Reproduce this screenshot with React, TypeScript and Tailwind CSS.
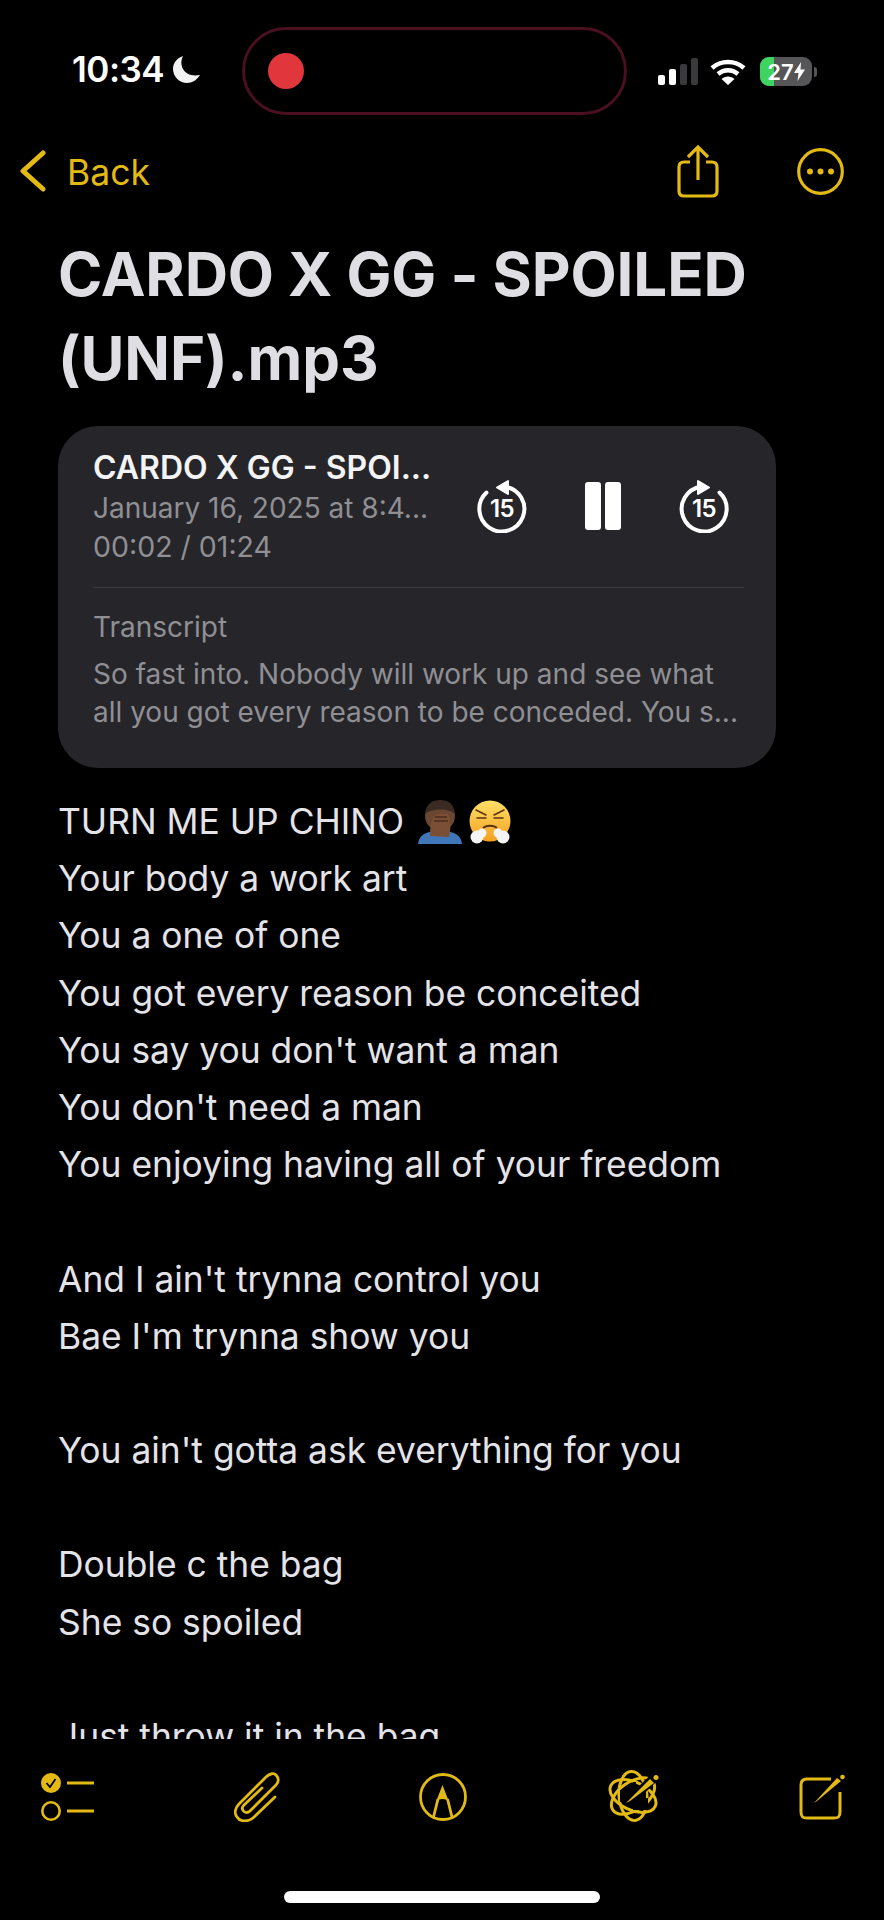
const lyrics = [
  "Your body a work art",
  "You a one of one",
  "You got every reason be conceited",
  "You say you don't want a man",
  "You don't need a man",
  "You enjoying having all of your freedom",
  "",
  "And I ain't trynna control you",
  "Bae I'm trynna show you",
  "",
  "You ain't gotta ask everything for you",
  "",
  "Double c the bag",
  "She so spoiled",
  "",
  "Just throw it in the bag",
];

function Moon() {
  return (
    <svg width="30" height="30" viewBox="0 0 30 30">
      <path d="M11 2C6 12 13 24 28 21 25 26 20 29 15 29 7 29 1 22 1 15 1 9 5 4 11 2Z" fill="#f2f2f2" />
    </svg>
  );
}

function StatusIcons() {
  return (
    <div className="flex items-center pl-[31px] pt-[1px]">
      <svg width="41" height="27" viewBox="0 0 41 27" className="mr-[11px]">
        <rect x="0" y="17" width="7" height="10" rx="2" fill="#fff" />
        <rect x="11" y="11" width="7" height="16" rx="2" fill="#fff" />
        <rect x="22" y="6" width="7" height="21" rx="2" fill="#3a3a3c" />
        <rect x="33" y="0" width="7" height="27" rx="2" fill="#3a3a3c" />
      </svg>
      <svg width="36" height="26" viewBox="0 0 36 26" className="mr-[14px]">
        <path d="M2 9C11 1 25 1 34 9" fill="none" stroke="#fff" strokeWidth="4.5" />
        <path d="M8 15C14 10 22 10 28 15" fill="none" stroke="#fff" strokeWidth="4.5" />
        <path d="M18 26 11.500 20C15 16.500 21 16.500 24.500 20Z" fill="#fff" />
      </svg>
      <div className="relative flex h-[29px] w-[52px] items-center justify-center overflow-hidden rounded-[9px] bg-[#565658] text-[22px] leading-none font-semibold text-white">
        <div className="absolute inset-y-0 left-0 w-[14px] bg-[#3fd35f]" />
        <span className="relative">27</span>
        <svg width="11" height="19" viewBox="0 0 11 19" className="relative">
          <path d="M7 0 0 11H4.500L3.500 19 11 7.500H6.500Z" fill="#fff" />
        </svg>
      </div>
      <div className="ml-[2px] h-[10px] w-[3px] rounded-r-full bg-[#565658]" />
    </div>
  );
}

function ShareIcon() {
  return (
    <svg width="42" height="53" viewBox="0 0 42 53" fill="none" stroke="#e3b914" strokeWidth="3.200">
      <path d="M13 17H7C3.500 17 2 19 2 22V46C2 49.500 3.500 51 7 51H35C38.500 51 40 49.500 40 46V22C40 19 38.500 17 35 17H29" />
      <path d="M21 35V2M11 12 21 2 31 12" />
    </svg>
  );
}

function MoreIcon() {
  return (
    <svg width="47" height="47" viewBox="0 0 47 47">
      <circle cx="23.500" cy="23.500" r="21.800" fill="none" stroke="#e3b914" strokeWidth="3.200" />
      <circle cx="13" cy="23.500" r="3" fill="#e3b914" />
      <circle cx="23.500" cy="23.500" r="3" fill="#e3b914" />
      <circle cx="34" cy="23.500" r="3" fill="#e3b914" />
    </svg>
  );
}

function SkipIcon({ forward = false }: { forward?: boolean }) {
  return (
    <div className="relative h-[54px] w-[50px]">
      <svg width="50" height="54" viewBox="0 0 50 54" className={forward ? "-scale-x-100" : ""}>
        <path d="M28 7.700A22.500 22.500 0 1 1 9.500 13.500" fill="none" stroke="#fff" strokeWidth="4" strokeLinecap="round" />
        <path d="M31 2V15L20 8.500Z" fill="#fff" stroke="#fff" strokeWidth="2" strokeLinejoin="round" />
      </svg>
      <span className="absolute inset-x-0 top-[16px] text-center text-[24px] leading-[28px] font-semibold tracking-[-0.5px] text-white">
        15
      </span>
    </div>
  );
}

function PauseIcon() {
  return (
    <div className="flex h-[48px] w-[36px] justify-between">
      <div className="h-full w-[16px] rounded-[3px] bg-white" />
      <div className="h-full w-[16px] rounded-[3px] bg-white" />
    </div>
  );
}

function FacepalmEmoji() {
  return (
    <svg width="46" height="46" viewBox="0 0 46 46" className="absolute top-[6px] left-[417px]">
      <path d="M1 45C2 35 10 32 23 32 36 32 44 35 45 45Z" fill="#3f77b8" />
      <circle cx="23" cy="17" r="15" fill="#6b4630" />
      <path d="M8 15C9 4 16 1 23 1 31 1 37 4 38 15 32 9 15 9 8 15Z" fill="#3b2a21" />
      <path d="M13 37C13 26 15 16 21 15L31 15C34 20 34 30 32 38Z" fill="#7a4f36" />
      <path d="M18 18H30M17 22H31" stroke="#4a2d1e" strokeWidth="1.500" />
    </svg>
  );
}

function HuffEmoji() {
  return (
    <svg width="44" height="44" viewBox="0 0 44 44" className="absolute top-[7px] left-[468px]">
      <defs>
        <linearGradient id="huff" x1="0" y1="0" x2="0" y2="1">
          <stop offset="0" stopColor="#ffe066" />
          <stop offset="1" stopColor="#f5a020" />
        </linearGradient>
      </defs>
      <circle cx="22" cy="21" r="20.500" fill="url(#huff)" />
      <path d="M8 10 18 15M36 10 26 15M9 18H18M26 18H35" stroke="#5a3412" strokeWidth="1.600" strokeLinecap="round" />
      <path d="M15 28C18 25 26 25 29 28" fill="none" stroke="#5a3412" strokeWidth="1.800" />
      <circle cx="9" cy="37" r="6.500" fill="#f4f4f4" />
      <circle cx="14" cy="33" r="4.500" fill="#f4f4f4" />
      <circle cx="35" cy="37" r="6.500" fill="#f4f4f4" />
      <circle cx="30" cy="33" r="4.500" fill="#f4f4f4" />
    </svg>
  );
}

function ChecklistIcon() {
  return (
    <svg width="54" height="48" viewBox="0 0 54 48">
      <circle cx="10" cy="10" r="10" fill="#e3b914" />
      <path d="M5.500 10 9 14 14.500 6" fill="none" stroke="#000" strokeWidth="1.800" />
      <circle cx="10" cy="38" r="8.700" fill="none" stroke="#e3b914" strokeWidth="2.600" />
      <path d="M26 10H53M26 38H53" stroke="#e3b914" strokeWidth="3" />
    </svg>
  );
}

function ClipIcon() {
  return (
    <svg width="46" height="50" viewBox="0 0 46 50" fill="none" stroke="#e3b914" strokeWidth="2.800" strokeLinecap="round">
      <path d="M41 25 19 46C14 50 6 50 3 45 0 41 1 36 5 32L32 5C36 1 40 1 42 3 45 6 45 10 42 13L16 39C14 41 11 41 9.500 39 7.500 37 8 35 10 33L28 16" />
    </svg>
  );
}

function MarkupIcon() {
  return (
    <svg width="48" height="48" viewBox="0 0 48 48" fill="none" stroke="#e3b914" strokeWidth="2.800">
      <circle cx="24" cy="24" r="22.500" />
      <path d="M14.500 44 19 26M33 44 28.500 26" />
      <path d="M23.500 12 29.500 27.500Q23.500 24.500 17.500 27.500Z" fill="#e3b914" stroke="none" />
    </svg>
  );
}

function AtomPenIcon() {
  return (
    <svg width="54" height="54" viewBox="0 0 54 54" fill="none" stroke="#e3b914" strokeWidth="3">
      <ellipse cx="27" cy="26" rx="14" ry="24.500" transform="rotate(-5 27 26)" />
      <ellipse cx="27" cy="26" rx="14" ry="24.500" transform="rotate(55 27 26)" />
      <ellipse cx="27" cy="26" rx="14" ry="24.500" transform="rotate(115 27 26)" />
      <path d="M14 26H40M27 34H42M27 18H30" stroke="#000" strokeWidth="12" />
      <path d="M22 33 54 2" stroke="#000" strokeWidth="9" />
      <path d="M20 33 44 9 48 13 24 31Z" fill="#e3b914" stroke="none" />
      <circle cx="50" cy="7.500" r="2.500" fill="#e3b914" stroke="none" />
    </svg>
  );
}

function ComposeIcon() {
  return (
    <svg width="46" height="46" viewBox="0 0 46 46" fill="none" stroke="#e3b914" strokeWidth="3">
      <path d="M32 5H8C3.500 5 2 7 2 11V38C2 42.500 3.500 44 8 44H35C39.500 44 41 42.500 41 38V18" />
      <path d="M15 29 38 4 42 7 18 27Z" fill="#e3b914" stroke="none" />
      <circle cx="43.500" cy="3" r="2.300" fill="#e3b914" stroke="none" />
    </svg>
  );
}

export default function App() {
  return (
    <div className="flex h-[1920px] w-[884px] flex-col overflow-hidden bg-black font-['Inter',sans-serif] text-[#e4e4e8]">
      <div className="mt-[27px] flex h-[88px] shrink-0 items-center">
        <div className="flex w-[242px] items-center pb-[4px] pl-[72px]">
          <span className="text-[35px] leading-none font-semibold tracking-[-0.5px] text-white">10:34</span>
          <span className="ml-[8px] flex"><Moon /></span>
        </div>
        <div className="flex h-[88px] w-[385px] items-center rounded-[44px] border-[3px] border-[#4a1020] pl-[23px]">
          <div className="h-[36px] w-[36px] rounded-full bg-[#e0363c]" />
        </div>
        <StatusIcons />
      </div>

      <div className="mt-[12px] flex h-[88px] shrink-0 items-center pr-[40px] pl-[20px]">
        <svg width="26" height="42" viewBox="0 0 26 42" fill="none" stroke="#e3b914" strokeWidth="5" strokeLinecap="round" strokeLinejoin="round">
          <path d="M23 3 3 21 23 39" />
        </svg>
        <span className="ml-[21px] pt-[3px] text-[35.500px] leading-none text-[#e3b914]">Back</span>
        <div className="ml-auto flex items-center gap-[78px]">
          <ShareIcon />
          <MoreIcon />
        </div>
      </div>

      <div className="mt-[17px] shrink-0 px-[58px]">
        <h1 className="text-[60px] leading-[84px] font-bold tracking-[-0.1px] text-[#dedee3]">
          CARDO X GG - SPOILED (UNF).mp3
        </h1>

        <div className="mt-[26px] h-[342px] w-[718px] rounded-[40px] bg-[#26252a] px-[35px] pt-[21px]">
          <div className="flex h-[140px] items-start">
            <div className="w-[350px]">
              <div className="text-[32px] leading-[42px] font-semibold text-[#f4f4f6]">CARDO X GG - SPOI...</div>
              <div className="text-[28px] leading-[38px] text-[#8f8f94]">January 16, 2025 at 8:4...</div>
              <div className="mt-[1px] text-[28.500px] leading-[38px] text-[#8f8f94]">00:02 / 01:24</div>
            </div>
            <div className="mt-[32px] ml-[34px] flex items-center gap-[58px]">
              <SkipIcon />
              <PauseIcon />
              <SkipIcon forward />
            </div>
          </div>
          <div className="h-[1px] w-[651px] bg-[#3a393e]" />
          <div className="mt-[20px] text-[28px] leading-[38px] text-[#8f8f94]">Transcript</div>
          <div className="mt-[9px] text-[28px] leading-[38px] text-[#8f8f94]">
            <div className="whitespace-nowrap">So fast into. Nobody will work up and see what</div>
            <div className="whitespace-nowrap">all you got every reason to be conceded. You s...</div>
          </div>
        </div>
      </div>

      <div className="relative mt-[25px] h-[946px] shrink-0 overflow-hidden px-[58px] text-[35.400px] leading-[57.200px]">
        <div>TURN ME UP CHINO</div>
        <FacepalmEmoji />
        <HuffEmoji />
        {lyrics.map((line, i) => (
          <div key={i} className="h-[57.200px]">
            {line}
          </div>
        ))}
      </div>

      <div className="flex shrink-0 items-center justify-between pt-[31px] pr-[39px] pl-[41px]">
        <ChecklistIcon />
        <ClipIcon />
        <MarkupIcon />
        <AtomPenIcon />
        <ComposeIcon />
      </div>

      <div className="mt-[67px] ml-[284px] h-[12px] w-[316px] shrink-0 rounded-full bg-white" />
    </div>
  );
}
